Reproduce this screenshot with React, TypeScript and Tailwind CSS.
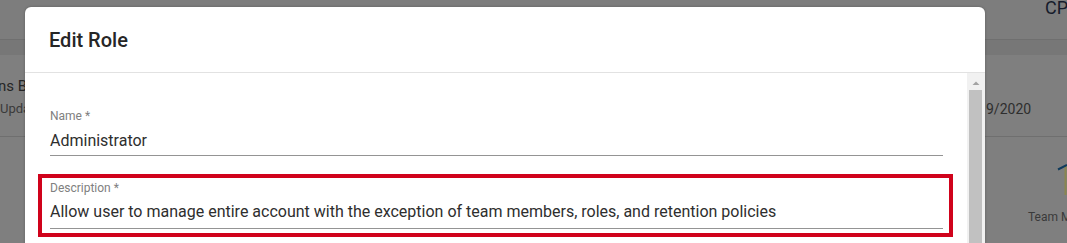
import React from "react";

const font = { fontFamily: "Roboto, 'Noto Sans', Arial, sans-serif" };

export default function App() {
  return (
    <div
      className="relative w-[1067px] h-[243px] overflow-hidden bg-[#7f7f7f]"
      style={font}
    >
      {/* background page (under the backdrop) */}
      <div className="flex flex-col h-full">
        <div className="h-[39px] bg-[#7d7d7d] flex justify-end shrink-0">
          <div className="w-[22px] overflow-hidden">
            <span className="block -mt-[3.5px] text-[18px] leading-[21px] text-[#161b2b] whitespace-nowrap">
              CPU
            </span>
          </div>
        </div>
        <div className="h-px bg-[#6f6f6f] shrink-0" />
        <div className="h-[15px] bg-[#777777] shrink-0" />
        <div className="h-[81px] bg-[#7f7f7f] flex shrink-0">
          <div className="w-[986px] shrink-0 pt-[21.5px] overflow-hidden">
            <div className="-ml-[2px] text-[15px] leading-[18px] text-[#262626] whitespace-nowrap">
              ns Basic
            </div>
            <div className="mt-[5px] text-[13px] leading-[17px] text-[#3a3a3a] whitespace-nowrap">
              Updated
            </div>
          </div>
          <div className="pt-[45.5px] text-[14px] leading-[17px] text-[#2e2e2e] whitespace-nowrap">
            9/2020
          </div>
        </div>
        <div className="h-px bg-[#6f6f6f] shrink-0" />
        <div className="flex-1 bg-[#7f7f7f] flex">
          <div className="ml-[1028px] flex flex-col">
            <svg
              className="ml-[27px] mt-[25px]"
              width="12"
              height="36"
              viewBox="0 0 12 36"
            >
              <line x1="10.5" y1="3" x2="10.5" y2="33" stroke="#8a8650" strokeWidth="2" />
              <line x1="3" y1="7.5" x2="12" y2="3" stroke="#0e3a5c" strokeWidth="2" />
            </svg>
            <div className="mt-[12px] text-[12px] leading-[14px] text-[#3a3a3a] whitespace-nowrap">
              Team Members
            </div>
          </div>
        </div>
      </div>

      {/* dialog */}
      <div className="absolute left-[25px] top-[7px] w-[960px] h-[260px] bg-white rounded-[6px] overflow-hidden flex flex-col shadow-[0_0_3px_rgba(0,0,0,0.25)]">
        <div className="h-[66px] shrink-0 border-b border-[#e2e2e2] px-[24px] pt-[17px]">
          <h2 className="text-[20px] leading-[32px] font-medium text-[#262626]">
            Edit Role
          </h2>
        </div>
        <div className="flex flex-1 min-h-0">
          <div className="flex-1 pl-[25px] pr-[24px] pt-[35px]">
            <div>
              <label className="block text-[12px] leading-[16px] text-[#808080]">
                Name *
              </label>
              <div className="pt-[7px] pb-[5px] border-b border-[#949494] text-[16px] leading-[19px] text-[#2e2e2e]">
                Administrator
              </div>
            </div>
            <div className="relative mt-[24px]">
              <div className="absolute -left-[12px] -right-[10px] -top-[6px] -bottom-[8.5px] border-[4px] border-[#d0021b] pointer-events-none" />
              <label className="block text-[12px] leading-[16px] text-[#808080]">
                Description *
              </label>
              <div className="pt-[5.5px] pb-[7px] border-b border-[#949494] text-[16px] leading-[19px] text-[#2e2e2e] whitespace-nowrap">
                Allow user to manage entire account with the exception of team
                members, roles, and retention policies
              </div>
            </div>
          </div>
          <div className="w-[18px] shrink-0 bg-[#f1f1f1] flex flex-col">
            <div className="pt-[8px] flex justify-center">
              <svg width="8" height="4" viewBox="0 0 8 4" className="-ml-px">
                <polygon points="0.5,4 4,0.5 7.5,4" fill="#a3a3a3" />
              </svg>
            </div>
            <div className="mt-[5px] ml-[2px] w-[13px] flex-1 bg-[#c1c1c1]" />
          </div>
        </div>
      </div>
    </div>
  );
}
